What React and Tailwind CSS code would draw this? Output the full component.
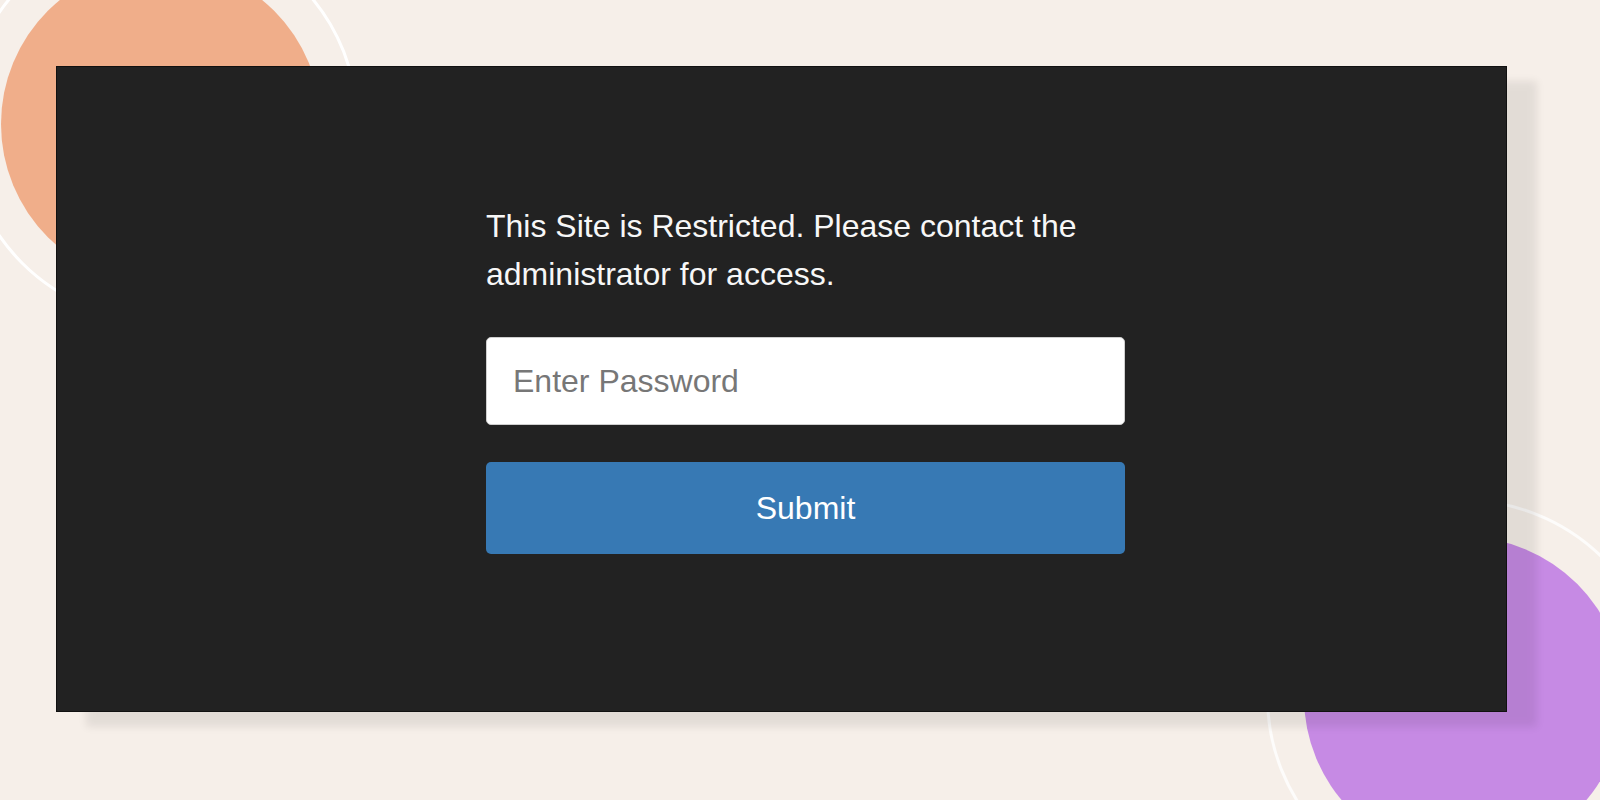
export default function App() {
  return (
    <div
      className="relative h-[800px] w-full overflow-hidden bg-[#f6efe9]"
      style={{ fontFamily: '"Liberation Sans", Arial, Helvetica, sans-serif' }}
    >
      {/* decorative circles behind the panel */}
      <div className="absolute left-[1px] top-[-36px] h-[320px] w-[320px] rounded-full bg-[#f0ae8a]" />
      <div className="absolute left-[-37px] top-[-74px] h-[396px] w-[396px] rounded-full border-[3px] border-white" />
      <div className="absolute left-[1304px] top-[537px] h-[320px] w-[320px] rounded-full bg-[#c68ae4]" />
      <div className="absolute left-[1266px] top-[499px] h-[396px] w-[396px] rounded-full border-[3px] border-white/80" />

      <div className="relative flex pl-[56px] pt-[66px]">
        <div className="flex h-[646px] w-[1451px] border border-[#111] bg-[#222222] pl-[429px] pt-[135px] shadow-[30px_15px_8px_rgba(0,0,0,0.08)]">
          <div className="flex w-[639px] flex-col">
            <p className="text-[32px] leading-[48px] text-[#f7f7f7]">
              This Site is Restricted. Please contact the administrator for access.
            </p>
            <div className="mt-[39px] flex flex-col gap-[37px]">
              <input
                type="password"
                placeholder="Enter Password"
                className="h-[88px] w-full rounded-[5px] border border-[#cfcfcf] bg-white px-[26px] text-[32px] text-[#333] outline-none placeholder:text-[#777]"
              />
              <button className="h-[92px] w-full rounded-[5px] bg-[#3779b4] text-[32px] text-white">
                Submit
              </button>
            </div>
          </div>
        </div>
      </div>
    </div>
  );
}
